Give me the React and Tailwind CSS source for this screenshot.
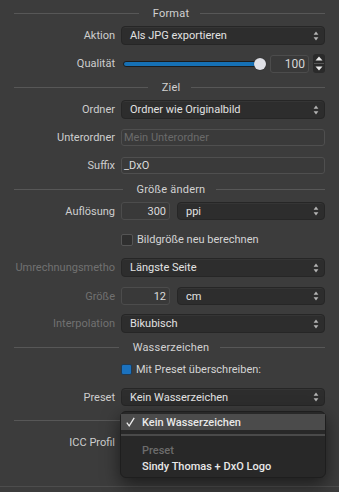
import React from 'react';

const Arrows = () => (
  <svg width="6" height="10" viewBox="0 0 6 10" className="shrink-0">
    <path d="M3 0.6 L5.4 3.8 H0.6Z" fill="#b4b4b4" />
    <path d="M3 9.4 L5.4 6.2 H0.6Z" fill="#b4b4b4" />
  </svg>
);

const Header = ({ title }) => (
  <div className="flex items-center h-[20px]">
    <div className="flex-1 h-px bg-[#575757]" />
    <span className="ml-[14px] mr-[11px] text-[#d2d2d2] tracking-[0.2px]">{title}</span>
    <div className="flex-1 h-px bg-[#575757]" />
  </div>
);

const Label = ({ children, dim }) => (
  <div className={dim ? 'w-[101px] shrink-0 text-right text-[#717171]' : 'w-[101px] shrink-0 text-right text-[#cecece]'}>
    {children}
  </div>
);

const Select = ({ value, className = 'flex-1' }) => (
  <div className={`${className} h-full flex items-center justify-between pl-[8px] pr-[5px] bg-[#2d2d2d] border border-[#262626] rounded-[4px] shadow-[inset_0_1px_0_rgba(255,255,255,0.04)] text-[#e2e2e2]`}>
    <span>{value}</span>
    <Arrows />
  </div>
);

const Field = ({ value, placeholder }) => (
  <div className="flex-1 h-full flex items-center px-[2px] bg-[#3a3a3a] border border-[#4f4f4f] rounded-[3px]">
    {value ? <span className="text-[#dcdcdc]">{value}</span> : <span className="text-[#6a6a6a]">{placeholder}</span>}
  </div>
);

const NumBox = ({ value }) => (
  <div className="w-[49px] shrink-0 h-full flex items-center justify-end pr-[3px] bg-[#393939] border border-[#4c4c4c] rounded-[3px] text-[#dcdcdc]">
    {value}
  </div>
);

const Check = ({ checked, label }) => (
  <div className="flex items-center h-[19px] pl-[107px]">
    {checked ? (
      <div className="w-[11px] h-[11px] rounded-[2px] bg-[#1b72bf] border border-[#1f3b55]" />
    ) : (
      <div className="w-[12px] h-[12px] rounded-[2px] bg-[#2f2f2f] border border-[#555555]" />
    )}
    <span className="ml-[4px] text-[#d4d4d4]">{label}</span>
  </div>
);

export default function App() {
  return (
    <div className="relative w-[339px] h-[492px] overflow-hidden bg-[#3c3c3c] font-['Roboto','Liberation_Sans',sans-serif] text-[11px] leading-none">
      <div className="px-[14px] pt-[3px] flex flex-col">
        <Header title="Format" />

        <div className="flex items-center h-[19px] mt-[3px] gap-[6px]">
          <Label>Aktion</Label>
          <Select value="Als JPG exportieren" />
        </div>

        <div className="flex items-center h-[19px] mt-[9px] gap-[6px]">
          <Label>Qualität</Label>
          <div className="flex-1 flex items-center h-full">
            <div className="flex-1 relative h-full flex items-center pl-[2px]">
              <div className="flex-1 h-[6px] rounded-full bg-[#1670b4] border border-[#1c1c1c]" />
              <div className="w-[12px] h-[12px] -ml-[5px] rounded-full bg-[#dfe0e6] shadow-[0_0_1px_rgba(0,0,0,0.6)]" />
            </div>
            <div className="ml-[4px] w-[39px] h-[18px] flex items-center justify-end pr-[3px] bg-[#393939] border border-[#4c4c4c] rounded-[3px] text-[#d6d6d6] text-[12px]">
              100
            </div>
            <div className="ml-[4px] w-[12px] h-[19px] flex flex-col items-center justify-center gap-[2px] bg-[#2a2a2a] rounded-[3px]">
              <svg width="8" height="5" viewBox="0 0 8 5"><path d="M4 0.5 L7.5 4.5 H0.5Z" fill="#e8e8e8" /></svg>
              <div className="w-[10px] h-px bg-[#555555]" />
              <svg width="8" height="5" viewBox="0 0 8 5"><path d="M4 4.5 L7.5 0.5 H0.5Z" fill="#e8e8e8" /></svg>
            </div>
          </div>
        </div>

        <div className="mt-[4px]">
          <Header title="Ziel" />
        </div>

        <div className="flex items-center h-[19px] mt-[3px] gap-[6px]">
          <Label>Ordner</Label>
          <Select value="Ordner wie Originalbild" />
        </div>

        <div className="flex items-center h-[17px] mt-[10px] gap-[6px]">
          <Label>Unterordner</Label>
          <Field placeholder="Mein Unterordner" />
        </div>

        <div className="flex items-center h-[17px] mt-[11px] gap-[6px]">
          <Label>Suffix</Label>
          <Field value="_DxO" />
        </div>

        <div className="mt-[5px]">
          <Header title="Größe ändern" />
        </div>

        <div className="flex items-center h-[18px] mt-[3px] gap-[6px]">
          <Label>Auflösung</Label>
          <NumBox value="300" />
          <Select value="ppi" className="flex-1 ml-[1px]" />
        </div>

        <div className="mt-[10px]">
          <Check label="Bildgröße neu berechnen" />
        </div>

        <div className="flex items-center h-[19px] mt-[9px] gap-[6px]">
          <Label dim>Umrechnungsmetho</Label>
          <Select value="Längste Seite" />
        </div>

        <div className="flex items-center h-[18px] mt-[10px] gap-[6px]">
          <Label dim>Größe</Label>
          <NumBox value="12" />
          <Select value="cm" className="flex-1 ml-[1px]" />
        </div>

        <div className="flex items-center h-[19px] mt-[9px] gap-[6px]">
          <Label dim>Interpolation</Label>
          <Select value="Bikubisch" />
        </div>

        <div className="mt-[4px]">
          <Header title="Wasserzeichen" />
        </div>

        <div className="mt-[3px]">
          <Check checked label="Mit Preset überschreiben:" />
        </div>

        <div className="flex items-center h-[18px] mt-[9px] gap-[6px]">
          <Label>Preset</Label>
          <Select value="Kein Wasserzeichen" />
        </div>

        <div className="flex items-center h-[19px] mt-[5px]">
          <div className="flex-1 h-px bg-[#575757]" />
        </div>

        <div className="flex items-center h-[19px] mt-[3px] gap-[6px]">
          <Label>ICC Profil</Label>
          <Select value="" />
        </div>

        <div className="h-px bg-[#4d4d4d] mt-[34px] -mx-[14px]" />
      </div>

      <div className="absolute left-[120px] top-[411px] w-[206px] rounded-[6px] bg-[#282828] border border-[#1e1e1e] shadow-[0_6px_18px_rgba(0,0,0,0.55)] pt-[2px] pb-[3px] text-[#e8e8e8] font-medium">
        <div className="h-[16px] flex items-center bg-[#4b4b4b]">
          <svg width="9" height="10" viewBox="0 0 9 10" className="ml-[5px]">
            <path d="M0.8 5.6 L3.2 8.8 L8.2 0.8" fill="none" stroke="#eeeeee" strokeWidth="1.3" />
          </svg>
          <span className="ml-[7px]">Kein Wasserzeichen</span>
        </div>
        <div className="h-[2px] mt-[4px] bg-[#4a4a4a]" />
        <div className="h-[15px] mt-[7px] flex items-center pl-[21px] text-[#6c6c6c]">Preset</div>
        <div className="h-[15px] mt-[1px] flex items-center pl-[21px]">Sindy Thomas + DxO Logo</div>
      </div>
    </div>
  );
}
